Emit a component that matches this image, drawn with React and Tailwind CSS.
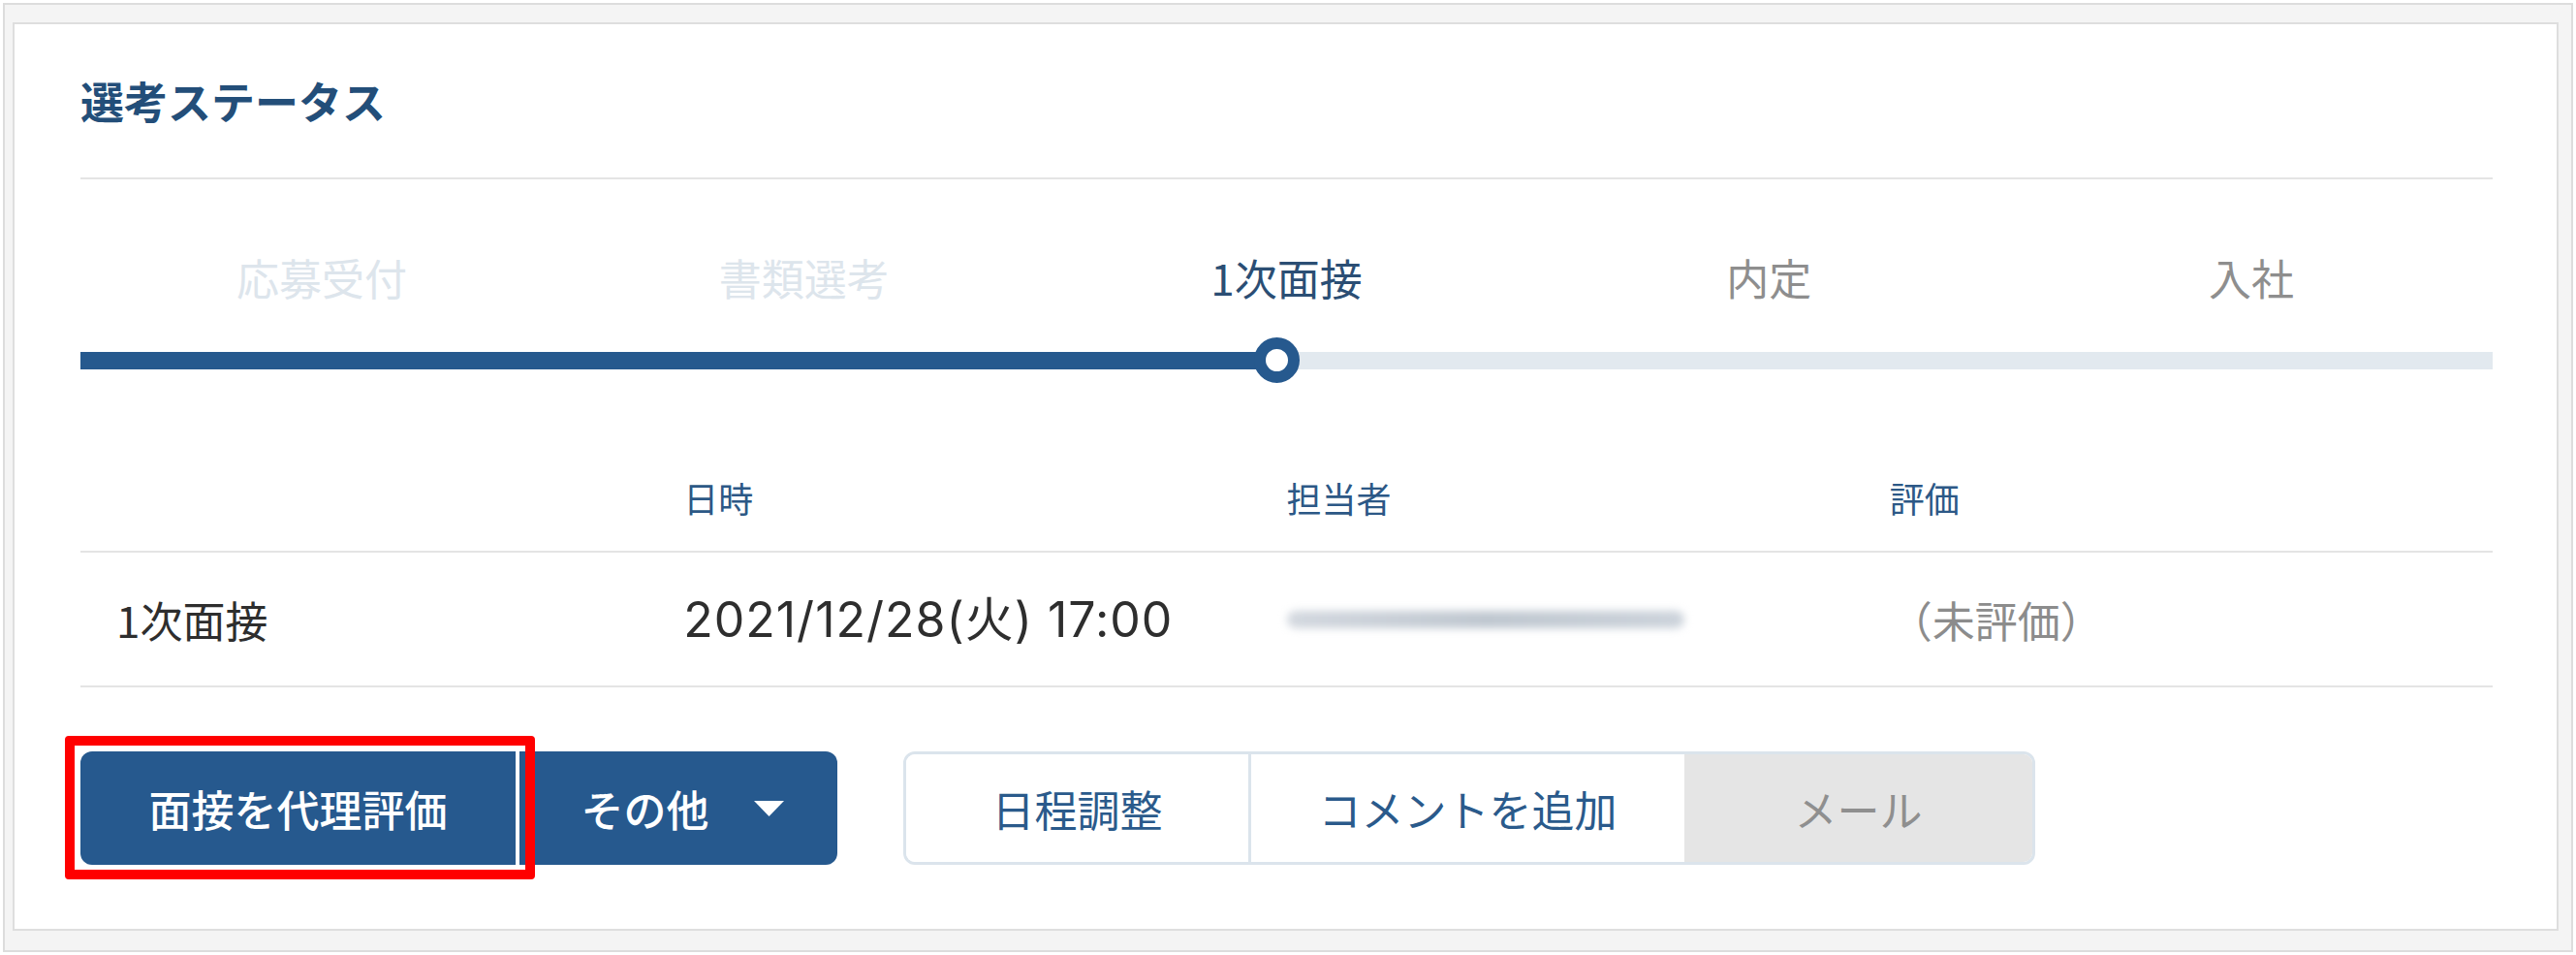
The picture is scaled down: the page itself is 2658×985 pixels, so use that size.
import React from 'react';

const steps = [
  { label: '応募受付', tone: 'done' },
  { label: '書類選考', tone: 'done' },
  { label: '1次面接', tone: 'current' },
  { label: '内定', tone: 'todo' },
  { label: '入社', tone: 'todo' },
];

const toneClass = {
  done: 'text-[#dde5ec]',
  current: 'text-[#2b4e74]',
  todo: 'text-[#8e8e8e]',
};

const SelectionStatus = () => {
  return (
    <div className="border-2 border-[#dcdcdc] bg-[#f4f4f4] pt-[18px] pl-[8px] pr-[13px] pb-[20px]">
      <div className="border-2 border-[#dedede] bg-white pl-[68px] pr-[66px] pb-[66px]">
        {/* Header */}
        <div className="flex h-[160px] items-center border-b-2 border-[#e4e4e4]">
          <h2 className="text-[45px] font-bold leading-[66px] text-[#234e79]">選考ステータス</h2>
        </div>

        {/* Steps */}
        <div className="mt-[68px] grid grid-cols-5">
          {steps.map((step) => (
            <div key={step.label} className={`text-center text-[44px] leading-[66px] ${toneClass[step.tone]}`}>
              {step.label}
            </div>
          ))}
        </div>
        <div className="relative mt-[44px] h-[18px] bg-[#e2e9ef]">
          <div className="h-full w-1/2 bg-[#26598e]" />
          <div className="absolute left-[calc(50%-34px)] top-[-15px] h-[47px] w-[47px] rounded-full border-[12px] border-[#26598e] bg-white" />
        </div>

        {/* Interview table */}
        <div className="mt-[77px]">
          <div className="grid h-[112px] grid-cols-4 items-center border-b-2 border-[#e4e4e4] text-[36px] leading-[54px] text-[#2c5886]">
            <div />
            <div>日時</div>
            <div>担当者</div>
            <div>評価</div>
          </div>
          <div className="grid h-[139px] grid-cols-4 items-center border-b-2 border-[#e4e4e4] text-[44px] leading-[66px] text-[#2e2e2e]">
            <div className="pl-[37px]">1次面接</div>
            <div className="font-['Inter','Noto_Sans_CJK_JP',sans-serif] text-[50px] tracking-[1px]">2021/12/28(火) 17:00</div>
            <div>
              <div className="h-[18px] w-[410px] rounded-full bg-linear-to-r from-[#d3d8df] via-[#bfc7d0] to-[#ccd3db] blur-[4px]" />
            </div>
            <div className="text-[#8c8c8c]">（未評価）</div>
          </div>
        </div>

        {/* Actions */}
        <div className="mt-[66px] flex items-center">
          <div className="relative flex h-[117px]">
            <button className="w-[449px] rounded-l-[12px] bg-[#26598e] text-[44px] font-medium text-white">
              面接を代理評価
            </button>
            <button className="ml-[4px] flex w-[328px] items-center justify-center gap-[46px] rounded-r-[12px] bg-[#26598e] pl-[8px] text-[44px] font-medium text-white">
              <span>その他</span>
              <svg width="31" height="16" viewBox="0 0 31 16">
                <polygon points="0,0 31,0 15.5,16" fill="#ffffff" />
              </svg>
            </button>
            <div className="pointer-events-none absolute left-[-16px] top-[-16px] h-[148px] w-[485px] rounded-[4px] border-[10px] border-[#ff0000]" />
          </div>

          <div className="ml-[68px] flex h-[117px] overflow-hidden rounded-[12px] border-[3px] border-[#dbe4ec] text-[44px]">
            <button className="w-[356px] border-r-[3px] border-[#dbe4ec] bg-white text-[#2a5a8b]">日程調整</button>
            <button className="w-[447px] bg-white text-[#2a5a8b]">コメントを追加</button>
            <button className="w-[359px] bg-[#e5e5e5] text-[#8f8f8f]">メール</button>
          </div>
        </div>
      </div>
    </div>
  );
};

const App = () => {
  return (
    <div className="min-h-screen bg-white p-[3px] font-['Noto_Sans_CJK_JP',sans-serif]">
      <SelectionStatus />
    </div>
  );
};

export default App;
